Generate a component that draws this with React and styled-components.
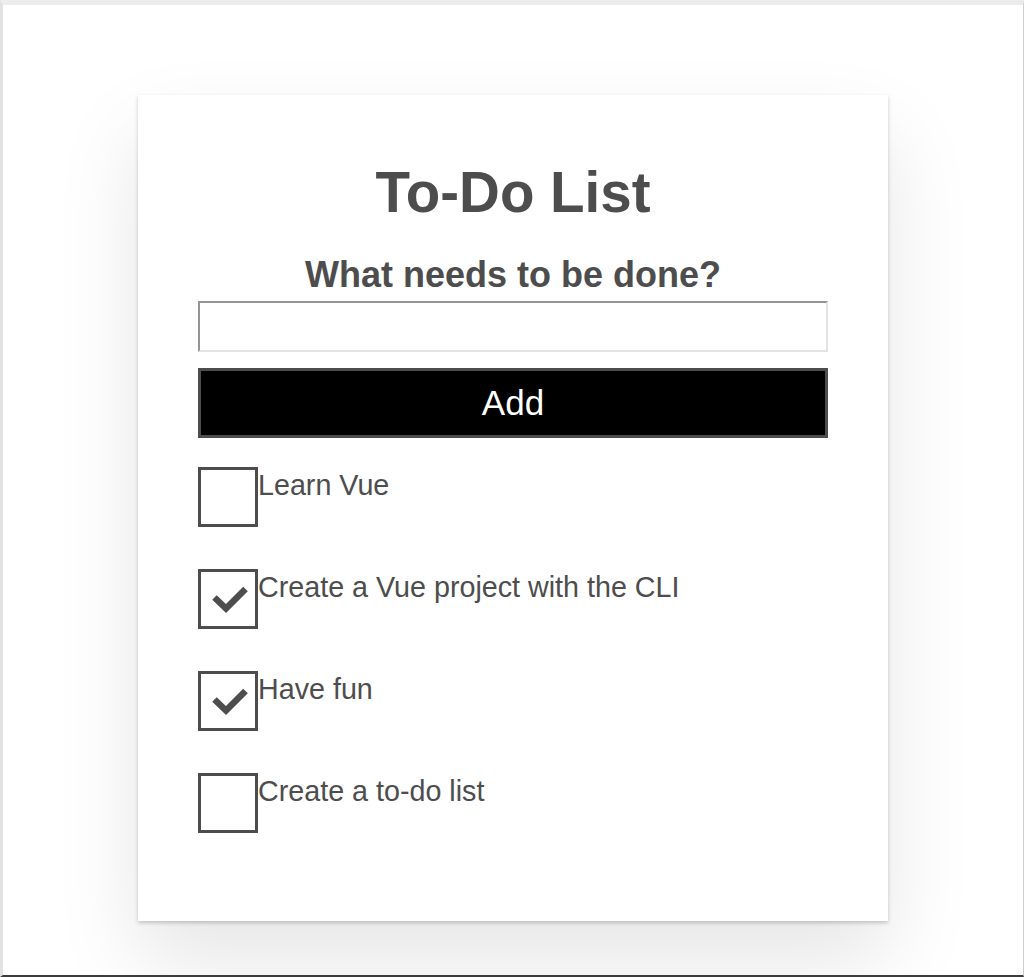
import React, { useState } from 'react';
import styled, { createGlobalStyle } from 'styled-components';

const GlobalStyle = createGlobalStyle`
  html, body {
    margin: 0;
    padding: 0;
    background: #fff;
  }
  body {
    font-family: "Liberation Sans", Arial, sans-serif;
    color: #4d4d4d;
  }
  * {
    box-sizing: border-box;
  }
`;

const Frame = styled.div`
  width: 1024px;
  height: 977px;
  overflow: hidden;
  background: #fff;
  border-top: 5px solid #ececec;
  border-left: 3px solid #e2e2e2;
  border-right: 1px solid #cfcfcf;
  border-bottom: 2px solid #3c3c3c;
  display: flex;
  flex-direction: column;
  align-items: center;
`;

const Card = styled.main`
  width: 750px;
  margin-top: 90px;
  padding: 63px 60px 88px;
  background: #fff;
  box-shadow: 0 2px 4px 0 rgba(0, 0, 0, 0.2), 0 40px 80px 0 rgba(0, 0, 0, 0.1);
`;

const Title = styled.h1`
  margin: 0 0 24px;
  font-size: 56.5px;
  line-height: 70px;
  font-weight: 700;
  text-align: center;
`;

const Form = styled.form`
  display: flex;
  flex-direction: column;
`;

const Prompt = styled.label`
  font-size: 36px;
  line-height: 45px;
  font-weight: 700;
  text-align: center;
  margin-bottom: 4px;
`;

const TextInput = styled.input`
  height: 51px;
  width: 100%;
  padding: 0 8px;
  font: 28px "Liberation Sans", Arial, sans-serif;
  color: #4d4d4d;
  background: #fff;
  border: 2px solid;
  border-color: #959595 #e3e3e3 #e3e3e3 #959595;
  outline: none;
`;

const AddButton = styled.button`
  margin-top: 16px;
  height: 70px;
  width: 100%;
  background: #000;
  color: #fff;
  border: 3px solid #4d4d4d;
  font: 35px "Liberation Sans", Arial, sans-serif;
  cursor: pointer;
`;

const List = styled.ul`
  list-style: none;
  margin: 29px 0 0;
  padding: 0;
  display: flex;
  flex-direction: column;
  gap: 42px;
`;

const Item = styled.li`
  display: flex;
  align-items: flex-start;
  cursor: pointer;
`;

const Box = styled.span`
  flex: 0 0 60px;
  width: 60px;
  height: 60px;
  border: 3px solid #4d4d4d;
  position: relative;

  svg {
    position: absolute;
    left: -3px;
    top: -3px;
    display: ${(p) => (p.$checked ? 'block' : 'none')};
  }
`;

const ItemText = styled.span`
  font-size: 28.7px;
  line-height: 36px;
`;

const Check = () => (
  <svg width="60" height="60" viewBox="0 0 60 60">
    <polyline
      points="16.5,28.5 28,39.5 47.5,20"
      fill="none"
      stroke="#4d4d4d"
      strokeWidth="6.5"
      strokeLinecap="butt"
      strokeLinejoin="miter"
    />
  </svg>
);

const initialTodos = [
  { id: 1, label: 'Learn Vue', done: false },
  { id: 2, label: 'Create a Vue project with the CLI', done: true },
  { id: 3, label: 'Have fun', done: true },
  { id: 4, label: 'Create a to-do list', done: false },
];

const App = () => {
  const [todos, setTodos] = useState(initialTodos);
  const [text, setText] = useState('');

  const handleSubmit = (e) => {
    e.preventDefault();
    if (!text.trim()) return;
    setTodos([...todos, { id: Date.now(), label: text.trim(), done: false }]);
    setText('');
  };

  const toggle = (id) => {
    setTodos(todos.map((t) => (t.id === id ? { ...t, done: !t.done } : t)));
  };

  return (
    <>
      <GlobalStyle />
      <Frame>
        <Card>
          <Title>To-Do List</Title>
          <Form onSubmit={handleSubmit}>
            <Prompt htmlFor="new-todo">What needs to be done?</Prompt>
            <TextInput
              id="new-todo"
              type="text"
              autoComplete="off"
              value={text}
              onChange={(e) => setText(e.target.value)}
            />
            <AddButton type="submit">Add</AddButton>
          </Form>
          <List>
            {todos.map((todo) => (
              <Item key={todo.id} onClick={() => toggle(todo.id)}>
                <Box $checked={todo.done}>
                  <Check />
                </Box>
                <ItemText>{todo.label}</ItemText>
              </Item>
            ))}
          </List>
        </Card>
      </Frame>
    </>
  );
};

export default App;
